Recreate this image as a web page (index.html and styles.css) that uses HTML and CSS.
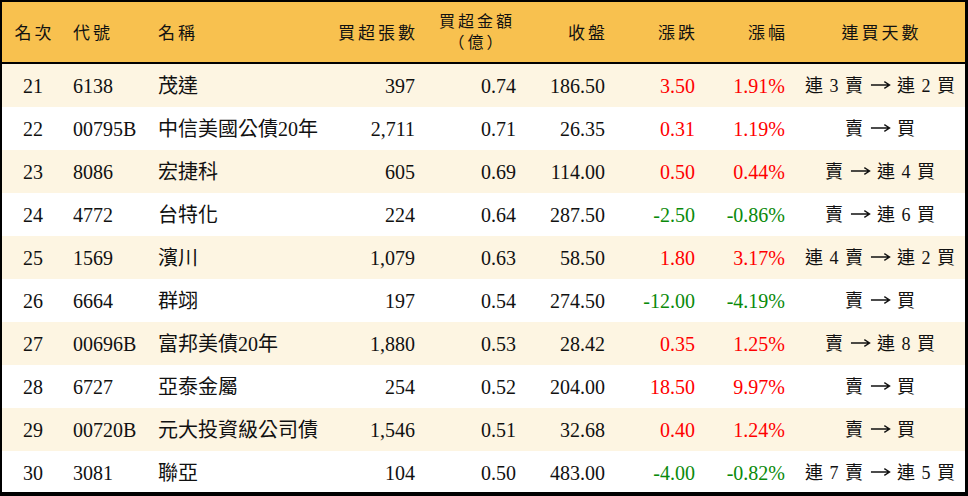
FILE: index.html
```html
<!DOCTYPE html>
<html lang="zh-Hant">
<head>
<meta charset="utf-8">
<title>買超排行</title>
<link rel="stylesheet" href="styles.css">
</head>
<body>
<div class="frame">
<table class="rank">
  <colgroup>
    <col class="c1"><col class="c2"><col class="c3"><col class="c4"><col class="c5"><col class="c6"><col class="c7"><col class="c8"><col class="c9">
  </colgroup>
  <thead>
    <tr>
      <th class="ctr"><span class="hd">名次</span></th>
      <th class="lft"><span class="hd">代號</span></th>
      <th class="lft"><span class="hd">名稱</span></th>
      <th class="rgt"><span class="hd">買超張數</span></th>
      <th class="ctr"><div class="two"><span class="hd line">買超金額</span><span class="hd line">（億）</span></div></th>
      <th class="rgt"><span class="hd">收盤</span></th>
      <th class="rgt"><span class="hd">漲跌</span></th>
      <th class="rgt"><span class="hd">漲幅</span></th>
      <th class="ctr"><span class="hd">連買天數</span></th>
    </tr>
  </thead>
  <tbody>
    <tr class="odd"><td class="ctr">21</td><td class="lft">6138</td><td class="lft">茂達</td><td class="rgt">397</td><td class="rgt">0.74</td><td class="rgt">186.50</td><td class="rgt up">3.50</td><td class="rgt up">1.91%</td><td class="ctr days">連 3 賣 <svg class="arr" viewBox="0 0 22 10" aria-label="→"><path d="M1 5H20M15 1.5L20.5 5L15 8.5"/></svg> 連 2 買</td></tr>
    <tr><td class="ctr">22</td><td class="lft">00795B</td><td class="lft">中信美國公債20年</td><td class="rgt">2,711</td><td class="rgt">0.71</td><td class="rgt">26.35</td><td class="rgt up">0.31</td><td class="rgt up">1.19%</td><td class="ctr days">賣 <svg class="arr" viewBox="0 0 22 10" aria-label="→"><path d="M1 5H20M15 1.5L20.5 5L15 8.5"/></svg> 買</td></tr>
    <tr class="odd"><td class="ctr">23</td><td class="lft">8086</td><td class="lft">宏捷科</td><td class="rgt">605</td><td class="rgt">0.69</td><td class="rgt">114.00</td><td class="rgt up">0.50</td><td class="rgt up">0.44%</td><td class="ctr days">賣 <svg class="arr" viewBox="0 0 22 10" aria-label="→"><path d="M1 5H20M15 1.5L20.5 5L15 8.5"/></svg> 連 4 買</td></tr>
    <tr><td class="ctr">24</td><td class="lft">4772</td><td class="lft">台特化</td><td class="rgt">224</td><td class="rgt">0.64</td><td class="rgt">287.50</td><td class="rgt down">-2.50</td><td class="rgt down">-0.86%</td><td class="ctr days">賣 <svg class="arr" viewBox="0 0 22 10" aria-label="→"><path d="M1 5H20M15 1.5L20.5 5L15 8.5"/></svg> 連 6 買</td></tr>
    <tr class="odd"><td class="ctr">25</td><td class="lft">1569</td><td class="lft">濱川</td><td class="rgt">1,079</td><td class="rgt">0.63</td><td class="rgt">58.50</td><td class="rgt up">1.80</td><td class="rgt up">3.17%</td><td class="ctr days">連 4 賣 <svg class="arr" viewBox="0 0 22 10" aria-label="→"><path d="M1 5H20M15 1.5L20.5 5L15 8.5"/></svg> 連 2 買</td></tr>
    <tr><td class="ctr">26</td><td class="lft">6664</td><td class="lft">群翊</td><td class="rgt">197</td><td class="rgt">0.54</td><td class="rgt">274.50</td><td class="rgt down">-12.00</td><td class="rgt down">-4.19%</td><td class="ctr days">賣 <svg class="arr" viewBox="0 0 22 10" aria-label="→"><path d="M1 5H20M15 1.5L20.5 5L15 8.5"/></svg> 買</td></tr>
    <tr class="odd"><td class="ctr">27</td><td class="lft">00696B</td><td class="lft">富邦美債20年</td><td class="rgt">1,880</td><td class="rgt">0.53</td><td class="rgt">28.42</td><td class="rgt up">0.35</td><td class="rgt up">1.25%</td><td class="ctr days">賣 <svg class="arr" viewBox="0 0 22 10" aria-label="→"><path d="M1 5H20M15 1.5L20.5 5L15 8.5"/></svg> 連 8 買</td></tr>
    <tr><td class="ctr">28</td><td class="lft">6727</td><td class="lft">亞泰金屬</td><td class="rgt">254</td><td class="rgt">0.52</td><td class="rgt">204.00</td><td class="rgt up">18.50</td><td class="rgt up">9.97%</td><td class="ctr days">賣 <svg class="arr" viewBox="0 0 22 10" aria-label="→"><path d="M1 5H20M15 1.5L20.5 5L15 8.5"/></svg> 買</td></tr>
    <tr class="odd"><td class="ctr">29</td><td class="lft">00720B</td><td class="lft">元大投資級公司債</td><td class="rgt">1,546</td><td class="rgt">0.51</td><td class="rgt">32.68</td><td class="rgt up">0.40</td><td class="rgt up">1.24%</td><td class="ctr days">賣 <svg class="arr" viewBox="0 0 22 10" aria-label="→"><path d="M1 5H20M15 1.5L20.5 5L15 8.5"/></svg> 買</td></tr>
    <tr><td class="ctr">30</td><td class="lft">3081</td><td class="lft">聯亞</td><td class="rgt">104</td><td class="rgt">0.50</td><td class="rgt">483.00</td><td class="rgt down">-4.00</td><td class="rgt down">-0.82%</td><td class="ctr days">連 7 賣 <svg class="arr" viewBox="0 0 22 10" aria-label="→"><path d="M1 5H20M15 1.5L20.5 5L15 8.5"/></svg> 連 5 買</td></tr>
  </tbody>
</table>
</div>
</body>
</html>
```
FILE: styles.css
```css
html, body {
  margin: 0;
  padding: 0;
  background: #ffffff;
}

.frame {
  width: 968px;
  height: 496px;
  box-sizing: border-box;
  border-style: solid;
  border-color: #000000;
  border-width: 2px 3px 4px 2px;
  overflow: hidden;
  background: #ffffff;
}

.rank {
  width: 963px;
  table-layout: fixed;
  border-collapse: separate;
  border-spacing: 0;
  font-family: "Liberation Serif", "Noto Sans CJK TC", serif;
  color: #111111;
}

.c1 { width: 62px; }
.c2 { width: 86px; }
.c3 { width: 180px; }
.c4 { width: 95px; }
.c5 { width: 101px; }
.c6 { width: 89px; }
.c7 { width: 90px; }
.c8 { width: 90px; }
.c9 { width: 170px; }

.rank th {
  height: 60px;
  padding: 0;
  background: #f8c14f;
  border-bottom: 2px solid #000000;
  font-weight: 400;
  font-size: 17px;
  line-height: 18px;
  font-family: "Noto Sans CJK TC", "Liberation Serif", sans-serif;
  vertical-align: middle;
  white-space: nowrap;
}

.hd {
  display: inline-block;
  letter-spacing: 3px;
  margin-right: -3px;
}

.two {
  display: flex;
  flex-direction: column;
  align-items: center;
  gap: 4px;
  padding-bottom: 2px;
}

.two .line {
  font-size: 16px;
  line-height: 17px;
  height: 17px;
}

.rank td {
  height: 43px;
  padding: 0;
  font-size: 20px;
  line-height: 24px;
  vertical-align: middle;
  white-space: nowrap;
}

.rank tr.odd td {
  background: #fdf5e2;
}

.ctr { text-align: center; }
.lft { text-align: left; }
.rgt { text-align: right; }

.rank td.lft:nth-child(2),
.rank th.lft:nth-child(2) { padding-left: 9px; }
.rank td.lft:nth-child(3),
.rank th.lft:nth-child(3) { padding-left: 8px; }
.rank td.rgt,
.rank th.rgt { padding-right: 10px; }

.rank td.up { color: #ff0000; }
.rank td.down { color: #0a8a0a; }

.rank td.days {
  font-size: 18px;
  word-spacing: 2px;
}

.arr {
  width: 21px;
  height: 10px;
  vertical-align: 2px;
  fill: none;
  stroke: #111111;
  stroke-width: 1.4;
}
```
